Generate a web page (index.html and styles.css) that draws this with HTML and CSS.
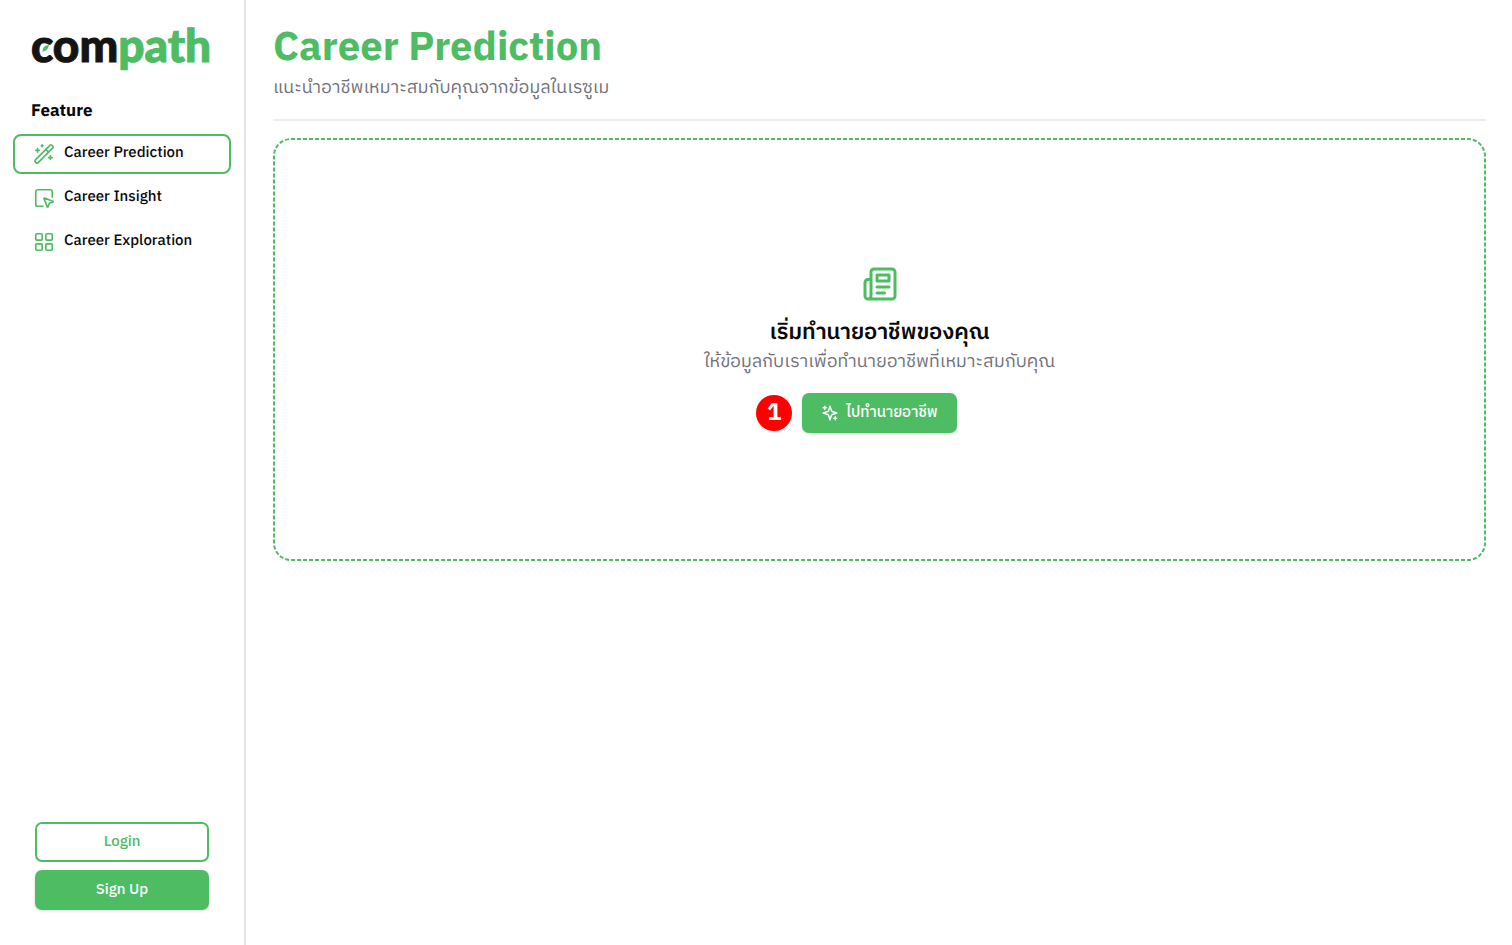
FILE: index.html
```html
<!DOCTYPE html>
<html lang="th">
<head>
<meta charset="utf-8">
<meta name="viewport" content="width=device-width, initial-scale=1">
<title>Compath – Career Prediction</title>
<link rel="stylesheet" href="styles.css">
</head>
<body>
<div class="app">
  <aside class="sidebar">
    <a class="logo" href="#" aria-label="compath">
      <span class="logo-com">com</span><span class="logo-path">path</span>
      <svg class="logo-leaf" viewBox="0 0 8 8" aria-hidden="true"><path d="M8 0C3.500 .3 1 2.500 1 6l-.8 2 2-1C5.500 6.500 7 4 8 0z" fill="#4ebc63"/></svg>
    </a>
    <h2 class="nav-title">Feature</h2>
    <nav class="nav">
      <a class="nav-item active" href="#">
        <svg class="icon" viewBox="0 0 24 24" aria-hidden="true"><path d="m21.640 3.640-1.280-1.280a1.210 1.210 0 0 0-1.720 0L2.360 18.640a1.210 1.210 0 0 0 0 1.720l1.280 1.280a1.200 1.200 0 0 0 1.720 0L21.640 5.360a1.200 1.200 0 0 0 0-1.720"/><path d="m14 7 3 3M5 6v4M19 14v4M10 2v2M7 8H3M21 16h-4M11 3H9"/></svg>
        <span>Career Prediction</span>
      </a>
      <a class="nav-item" href="#">
        <svg class="icon" viewBox="0 0 24 24" aria-hidden="true"><path d="m12.034 12.681a.498.498 0 0 1 .647-.647l9 3.500a.5.5 0 0 1-.033.943l-3.444 1.068a1 1 0 0 0-.66.660l-1.067 3.443a.5.5 0 0 1-.943.033z"/><path d="M21 11V5a2 2 0 0 0-2-2H5a2 2 0 0 0-2 2v14a2 2 0 0 0 2 2h6"/></svg>
        <span>Career Insight</span>
      </a>
      <a class="nav-item" href="#">
        <svg class="icon" viewBox="0 0 24 24" aria-hidden="true"><rect x="3" y="3" width="7" height="7" rx="1"/><rect x="14" y="3" width="7" height="7" rx="1"/><rect x="14" y="14" width="7" height="7" rx="1"/><rect x="3" y="14" width="7" height="7" rx="1"/></svg>
        <span>Career Exploration</span>
      </a>
    </nav>
    <div class="auth">
      <button class="btn btn-outline" type="button"><span>Login</span></button>
      <button class="btn btn-primary" type="button"><span>Sign Up</span></button>
    </div>
  </aside>
  <main class="main">
    <header class="page-header">
      <h1 class="page-title">Career Prediction</h1>
      <p class="page-subtitle">แนะนำอาชีพเหมาะสมกับคุณจากข้อมูลในเรซูเม</p>
    </header>
    <section class="panel">
      <svg class="panel-outline" aria-hidden="true"><rect width="100%" height="100%" rx="17"/></svg>
      <svg class="icon icon-large" viewBox="0 0 24 24" aria-hidden="true"><path d="M4 22h16a2 2 0 0 0 2-2V4a2 2 0 0 0-2-2H8a2 2 0 0 0-2 2v16a2 2 0 0 1-2 2Zm0 0a2 2 0 0 1-2-2v-9c0-1.100.9-2 2-2h2"/><path d="M18 14h-8M15 18h-5M10 6h8v4h-8V6Z"/></svg>
      <h2 class="panel-title">เริ่มทำนายอาชีพของคุณ</h2>
      <p class="panel-text">ให้ข้อมูลกับเราเพื่อทำนายอาชีพที่เหมาะสมกับคุณ</p>
      <div class="action">
        <span class="step">1</span>
        <button class="btn btn-primary" type="button">
          <svg class="icon icon-small" viewBox="0 0 24 24" aria-hidden="true"><path d="m12 3-1.912 5.813a2 2 0 0 1-1.275 1.275L3 12l5.813 1.912a2 2 0 0 1 1.275 1.275L12 21l1.912-5.813a2 2 0 0 1 1.275-1.275L21 12l-5.813-1.912a2 2 0 0 1-1.275-1.275L12 3ZM5 3v4M19 17v4M3 5h4M17 19h4"/></svg>
          <span>ไปทำนายอาชีพ</span>
        </button>
      </div>
    </section>
  </main>
</div>
</body>
</html>
```
FILE: styles.css
```css
* { box-sizing: border-box; }
body {
  margin: 0;
  background: #fff;
  color: #09090b;
  font-family: "IBM Plex Sans Thai", "IBM Plex Sans", "Noto Sans", "Noto Sans Thai", sans-serif;
  text-rendering: geometricPrecision;
}
h1, h2, p { margin: 0; }
.app { display: flex; min-height: 100vh; }
.sidebar {
  display: flex;
  flex-direction: column;
  flex: none;
  width: 246px;
  padding: 15px 13px 35px;
  border-right: 2px solid #e4e4e7;
}
.logo {
  position: relative;
  display: block;
  padding-left: 18px;
  font: 900 46px/60px Lato, sans-serif;
  color: #141414;
  -webkit-text-stroke: 1px;
  text-decoration: none;
  white-space: nowrap;
}
.logo-path { color: #4ebc63; }
.logo-leaf { position: absolute; left: 29px; top: 30px; width: 7px; height: 7px; }
.nav-title { margin-top: 24px; padding-left: 18px; font-size: 17px; font-weight: 700; line-height: 26px; }
.nav { display: flex; flex-direction: column; gap: 4px; margin-top: 9px; }
.nav-item {
  display: flex;
  align-items: center;
  gap: 9px;
  height: 40px;
  padding: 0 18px;
  border: 2px solid transparent;
  border-radius: 8px;
  color: #09090b;
  font-size: 15px;
  font-weight: 500;
  text-decoration: none;
  white-space: nowrap;
}
.nav-item span { padding-bottom: 1px; }
.btn span { padding-bottom: 2px; }
.nav-item.active { border-color: #4ebc63; }
.icon {
  flex: none;
  width: 22px;
  height: 22px;
  fill: none;
  stroke: #4ebc63;
  stroke-width: 2;
  stroke-linecap: round;
  stroke-linejoin: round;
}
.nav .icon { stroke-width: 1.800; }
.icon-large { width: 38px; height: 38px; padding: 1px; }
.icon-small { width: 18px; height: 18px; stroke: #fff; }
.auth { display: flex; flex-direction: column; gap: 8px; margin-top: auto; padding: 0 22px; }
.btn {
  display: flex;
  align-items: center;
  justify-content: center;
  gap: 7px;
  height: 40px;
  padding: 0 18px;
  border: 0;
  border-radius: 7px;
  font-family: inherit;
  font-size: 15px;
  font-weight: 500;
}
.btn-outline { border: 2px solid #4ebc63; background: #fff; color: #4ebc63; }
.btn-primary { background: #4ebc63; color: #fff; box-shadow: 0 1px 3px #00000026; }
.main { flex: 1; min-width: 0; padding: 25px 26px 26px 27px; }
.page-header { padding-bottom: 15px; border-bottom: 2px solid #eee; }
.page-title { color: #4ebc63; font-size: 40px; font-weight: 700; line-height: 48px; }
.page-subtitle, .panel-text { color: #71717a; font-size: 18px; line-height: 31px; }
.panel {
  position: relative;
  display: flex;
  flex-direction: column;
  align-items: center;
  margin-top: 17px;
  padding: 127px 24px 128px;
  text-align: center;
}
.panel-outline {
  position: absolute;
  inset: 1px;
  width: calc(100% - 2px);
  height: calc(100% - 2px);
  overflow: visible;
  fill: none;
  stroke: #4ebc63;
  stroke-width: 2;
  stroke-dasharray: 4 2;
}
.panel-title { margin-top: 16px; font-size: 22px; font-weight: 600; line-height: 28px; }
.action { position: relative; margin-top: 15px; }
.action .btn { padding: 0 19px; }
.step {
  position: absolute;
  right: calc(100% + 10px);
  top: 2px;
  width: 36px;
  height: 36px;
  border-radius: 50%;
  background: #f00;
  color: #fff;
  font: 700 24px/36px "IBM Plex Sans Thai", "DejaVu Sans", sans-serif;
}
```
